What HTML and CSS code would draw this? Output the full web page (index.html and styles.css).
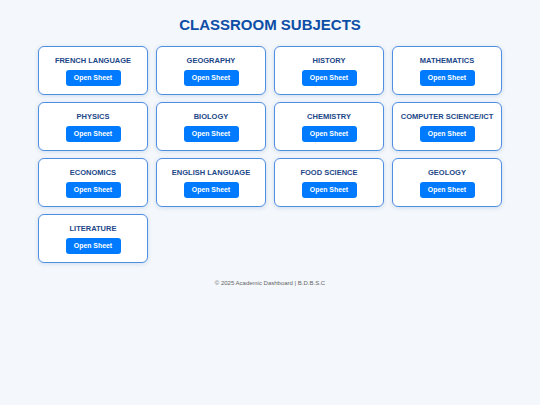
FILE: index.html
```html
<!DOCTYPE html>
<html lang="en">
<head>
<meta charset="utf-8">
<title>Classroom Subjects</title>
<link rel="stylesheet" href="styles.css">
</head>
<body>
<main class="page">
  <h1 class="title">CLASSROOM SUBJECTS</h1>
  <div class="grid">
    <div class="card"><h2 class="card-title">FRENCH LANGUAGE</h2><a class="btn" href="#">Open Sheet</a></div>
    <div class="card"><h2 class="card-title">GEOGRAPHY</h2><a class="btn" href="#">Open Sheet</a></div>
    <div class="card"><h2 class="card-title">HISTORY</h2><a class="btn" href="#">Open Sheet</a></div>
    <div class="card"><h2 class="card-title">MATHEMATICS</h2><a class="btn" href="#">Open Sheet</a></div>
    <div class="card"><h2 class="card-title">PHYSICS</h2><a class="btn" href="#">Open Sheet</a></div>
    <div class="card"><h2 class="card-title">BIOLOGY</h2><a class="btn" href="#">Open Sheet</a></div>
    <div class="card"><h2 class="card-title">CHEMISTRY</h2><a class="btn" href="#">Open Sheet</a></div>
    <div class="card"><h2 class="card-title">COMPUTER SCIENCE/ICT</h2><a class="btn" href="#">Open Sheet</a></div>
    <div class="card"><h2 class="card-title">ECONOMICS</h2><a class="btn" href="#">Open Sheet</a></div>
    <div class="card"><h2 class="card-title">ENGLISH LANGUAGE</h2><a class="btn" href="#">Open Sheet</a></div>
    <div class="card"><h2 class="card-title">FOOD SCIENCE</h2><a class="btn" href="#">Open Sheet</a></div>
    <div class="card"><h2 class="card-title">GEOLOGY</h2><a class="btn" href="#">Open Sheet</a></div>
    <div class="card"><h2 class="card-title">LITERATURE</h2><a class="btn" href="#">Open Sheet</a></div>
  </div>
  <footer class="footer">© 2025 Academic Dashboard | B.D.B.S.C</footer>
</main>
</body>
</html>
```

FILE: styles.css
```css
html, body {
  margin: 0;
  padding: 0;
  background: #f4f7fb;
}
body {
  font-family: "Liberation Sans", Arial, sans-serif;
  min-height: 405px;
}
.page {
  width: 464px;
  margin: 0 auto;
  padding-top: 15px;
}
.title {
  margin: 0;
  text-align: center;
  font-size: 15px;
  line-height: 20px;
  font-weight: bold;
  color: #0d4ea6;
}
.grid {
  margin-top: 11px;
  display: grid;
  grid-template-columns: repeat(4, 110px);
  column-gap: 8px;
  row-gap: 7px;
}
.card {
  box-sizing: border-box;
  height: 49px;
  background: #ffffff;
  border: 1.2px solid #4f8fe0;
  border-radius: 6px;
  box-shadow: 0 1px 4px rgba(40, 100, 180, 0.18);
  display: flex;
  flex-direction: column;
  align-items: center;
  padding-top: 8.5px;
}
.card-title {
  margin: 0;
  font-size: 7.5px;
  line-height: 9px;
  font-weight: bold;
  color: #1c4788;
  white-space: nowrap;
}
.btn {
  margin-top: 5px;
  display: block;
  box-sizing: border-box;
  width: 55px;
  height: 16px;
  line-height: 16px;
  text-align: center;
  background: #007bff;
  color: #ffffff;
  font-size: 6.9px;
  font-weight: bold;
  text-decoration: none;
  border-radius: 3px;
}
.footer {
  margin-top: 16px;
  text-align: center;
  font-size: 6px;
  line-height: 8px;
  color: #666666;
}
```
